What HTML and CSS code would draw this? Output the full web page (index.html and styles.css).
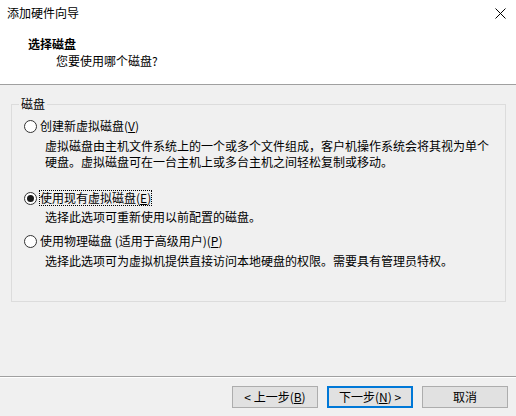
FILE: index.html
```html
<!DOCTYPE html>
<html lang="zh-CN">
<head>
<meta charset="utf-8">
<title>添加硬件向导</title>
<link rel="stylesheet" href="styles.css">
</head>
<body>
<div class="window">
  <div class="top">
    <div class="titlebar">
      <span class="title">添加硬件向导</span>
      <svg class="close" width="11" height="11" viewBox="0 0 11 11"><path d="M0.5 0.5 L10.5 10.5 M10.5 0.5 L0.5 10.5" stroke="#000" stroke-width="1" fill="none"/></svg>
    </div>
    <div class="header">
      <div class="header-title">选择磁盘</div>
      <div class="header-sub">您要使用哪个磁盘?</div>
    </div>
  </div>
  <div class="content">
    <fieldset class="group">
      <legend class="legend">磁盘</legend>
      <div class="option">
        <div class="radio-row"><span class="radio"></span><span class="label">创建新虚拟磁盘(<u>V</u>)</span></div>
        <div class="desc">虚拟磁盘由主机文件系统上的一个或多个文件组成，客户机操作系统会将其视为单个<br>硬盘。虚拟磁盘可在一台主机上或多台主机之间轻松复制或移动。</div>
      </div>
      <div class="option option-2">
        <div class="radio-row"><span class="radio checked"></span><span class="label focused">使用现有虚拟磁盘(<u>E</u>)</span></div>
        <div class="desc">选择此选项可重新使用以前配置的磁盘。</div>
      </div>
      <div class="option option-3">
        <div class="radio-row"><span class="radio"></span><span class="label">使用物理磁盘 (适用于高级用户)(<u>P</u>)</span></div>
        <div class="desc">选择此选项可为虚拟机提供直接访问本地硬盘的权限。需要具有管理员特权。</div>
      </div>
    </fieldset>
  </div>
  <div class="footer">
    <button class="btn">&lt; 上一步(<u>B</u>)</button>
    <button class="btn btn-default">下一步(<u>N</u>) &gt;</button>
    <button class="btn">取消</button>
  </div>
</div>
</body>
</html>
```
FILE: styles.css
```css
* { box-sizing: border-box; }
html, body { margin: 0; padding: 0; }
body {
  width: 516px;
  height: 416px;
  background: #f0f0f0;
  font-family: "Noto Sans CJK SC", "Microsoft YaHei", sans-serif;
  font-size: 12px;
  color: #000;
  overflow: hidden;
}
.window {
  display: flex;
  flex-direction: column;
  height: 416px;
}
.top {
  background: #fff;
  height: 85px;
  border-bottom: 1px solid #a0a0a0;
}
.titlebar {
  height: 26px;
  display: flex;
  align-items: center;
  justify-content: space-between;
  padding: 0 10px 0 7px;
}
.title { line-height: 16px; }
.close { display: block; }
.header {
  padding: 9px 0 0 28px;
}
.header-title {
  font-weight: bold;
  line-height: 17px;
}
.header-sub {
  padding-left: 28px;
  line-height: 17px;
}
.content {
  flex: 1;
  padding: 11px 10px 0 11px;
}
.group {
  margin: 0;
  border: 1px solid #dcdcdc;
  padding: 6px 10px 0 12px;
  height: 206px;
}
.legend {
  padding: 0 2px;
  margin-left: -5px;
  line-height: 16px;
}
.radio-row {
  display: flex;
  align-items: center;
  height: 16px;
}
.radio {
  width: 13px;
  height: 13px;
  border: 1px solid #333;
  border-radius: 50%;
  background: #fff;
  margin-right: 3px;
  display: flex;
  align-items: center;
  justify-content: center;
  flex: none;
}
.radio.checked::after {
  content: "";
  width: 7px;
  height: 7px;
  border-radius: 50%;
  background: #1a1a1a;
}
.label { line-height: 16px; }
.label.focused {
  outline: 1px dotted #000;
  outline-offset: -1px;
  padding: 0 1px;
  margin-left: -1px;
}
.desc {
  padding-left: 21px;
  line-height: 16px;
  margin-top: 4px;
}
.option-2 { margin-top: 20px; }
.option-2 .desc { margin-top: 3px; }
.option-3 { margin-top: 8px; }
.option-3 .desc { margin-top: 4px; }
u { text-decoration: underline; text-underline-offset: 1px; }
.footer {
  height: 40px;
  border-top: 1px solid #a0a0a0;
  box-shadow: inset 0 1px 0 #fff;
  display: flex;
  justify-content: flex-end;
  align-items: flex-start;
  gap: 9px;
  padding: 9px 8px 0 0;
}
.btn {
  width: 86px;
  height: 22px;
  background: #e1e1e1;
  border: 1px solid #adadad;
  font-family: inherit;
  font-size: 12px;
  color: #000;
  padding: 0;
  line-height: 18px;
}
.btn-default {
  border: 2px solid #0078d7;
}
```
